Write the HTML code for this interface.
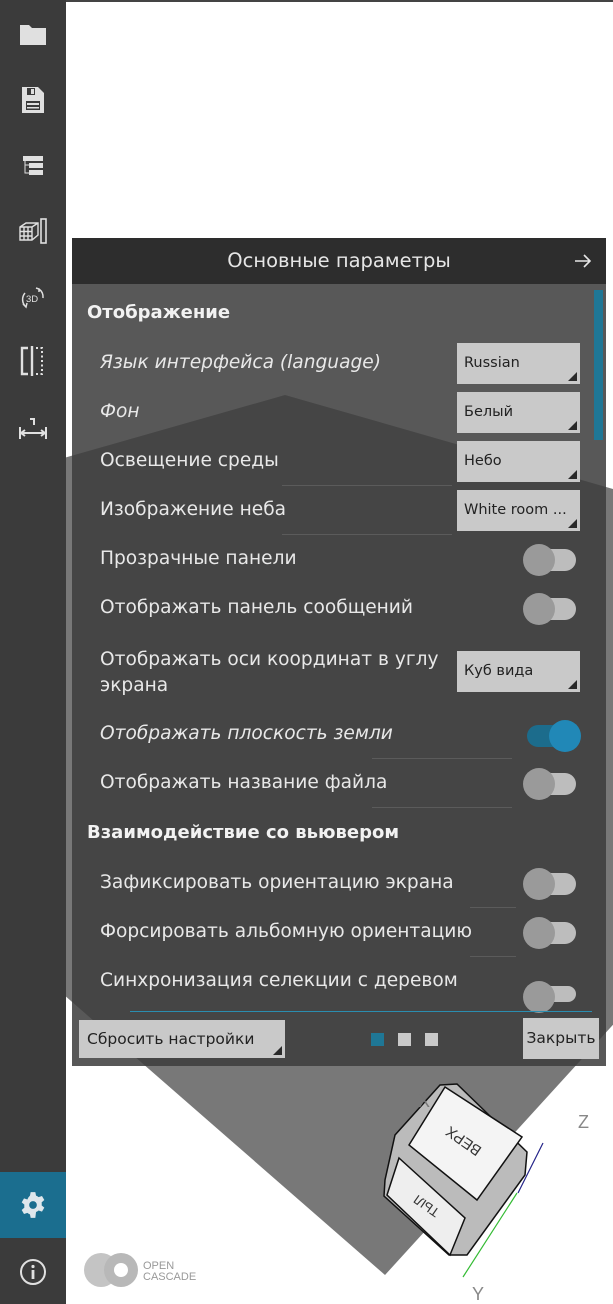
<!DOCTYPE html>
<html><head><meta charset="utf-8">
<style>
*{margin:0;padding:0;box-sizing:border-box}
body{width:613px;height:1304px;position:relative;overflow:hidden;background:#fff;font-family:"DejaVu Sans","Liberation Sans",sans-serif}
#side{position:absolute;left:0;top:0;width:66px;height:1304px;background:#3b3b3b}
.ic{position:absolute;left:0;width:66px;display:flex;justify-content:center;align-items:center}
#panel{position:absolute;left:72px;top:238px;width:534px;height:828px;background:rgba(60,60,60,0.86)}
#hdr{position:absolute;left:0;top:0;width:534px;height:46px;background:#2d2d2d;color:#e6e6e6;font-size:19.5px;text-align:center;line-height:46px}
.t{position:absolute;color:#e8e8e8;font-size:18.6px;white-space:nowrap}
.h{position:absolute;left:15px;color:#f2f2f2;font-size:18px;font-weight:bold}
.cb{position:absolute;left:385px;width:123px;height:41px;background:#c9c9c9;color:#222;font-size:14.5px;padding-left:7px;line-height:41px;white-space:nowrap}
.cb:after{content:"";position:absolute;right:3px;bottom:3px;border-left:9px solid transparent;border-bottom:9px solid #2a2a2a}
.tg{position:absolute;left:455px;width:49px;height:22px;border-radius:11px;background:#bdbdbd}
.tg:before{content:"";position:absolute;left:-4px;top:-5px;width:32px;height:32px;border-radius:50%;background:#9a9a9a}
.tg.on{background:#1c6c8c}
.tg.on:before{left:22px;background:#2188b7}
.ln{position:absolute;height:1px;background:rgba(255,255,255,0.12)}
</style></head><body>
<svg style="position:absolute;left:0;top:0" width="613" height="1304">
<polygon points="285,395,1000,600,385,1275,-400,590" fill="#787878"/>
<line x1="66" y1="1" x2="613" y2="1" stroke="#444" stroke-width="2"/>
</svg>
<div id="side">
 <div class="ic" style="top:18px;height:32px"><svg width="28" height="24"><path d="M1 3h9l3 3h14v17H1z" fill="#e0e0e0"/></svg></div>
 <div class="ic" style="top:84px;height:32px"><svg width="24" height="28"><path d="M1 1h16l6 6v20H1z" fill="#e0e0e0"/><rect x="6" y="2" width="8" height="7" fill="#3b3b3b"/><rect x="10" y="3" width="3" height="5" fill="#e0e0e0"/><rect x="5" y="15" width="14" height="9" fill="#3b3b3b"/><rect x="6" y="17" width="12" height="2" fill="#e0e0e0"/><rect x="6" y="21" width="12" height="1.5" fill="#e0e0e0"/></svg></div>
 <div class="ic" style="top:150px;height:32px"><svg width="24" height="24"><rect x="2" y="2" width="20" height="5" fill="#e0e0e0"/><rect x="8" y="9" width="14" height="5" fill="#e0e0e0"/><rect x="8" y="16" width="14" height="5" fill="#e0e0e0"/><path d="M4 7v12h4M4 11h4" stroke="#e0e0e0" fill="none"/></svg></div>
 <div class="ic" style="top:214px;height:34px"><svg width="30" height="28"><path d="M2 10l6-4h12v12l-6 5H2z M2 10h12v13 M14 10l6-4 M6 10v13 M10 10v13 M2 14.5h12 M2 19h12" stroke="#e0e0e0" fill="none" stroke-width="1.4"/><rect x="23" y="2" width="5" height="24" fill="none" stroke="#e0e0e0" stroke-width="1.6"/></svg></div>
 <div class="ic" style="top:282px;height:32px"><svg width="28" height="28"><text x="7" y="18" font-size="9.5" fill="#e0e0e0" font-family="Liberation Sans">3D</text><path d="M6 9a10 10 0 0 0 1 14M4 20l3 3 1-4M20 5a10 10 0 0 1 4 9M17 4l3 1 0 3" stroke="#e0e0e0" fill="none" stroke-width="1.5"/></svg></div>
 <div class="ic" style="top:344px;height:34px"><svg width="28" height="30"><path d="M9 2H3v26h6 M13 0v30" stroke="#e0e0e0" fill="none" stroke-width="2.4"/><path d="M17 2h6v26h-6" stroke="#e0e0e0" fill="none" stroke-width="2" stroke-dasharray="2 2.5"/></svg></div>
 <div class="ic" style="top:412px;height:34px"><svg width="30" height="26"><path d="M12 3h4v6 M2 11v12 M28 11v12 M3 17h24 M3 17l4-3 M3 17l4 3 M27 17l-4-3 M27 17l-4 3" stroke="#e0e0e0" fill="none" stroke-width="2"/></svg></div>
 <div class="ic" style="top:1172px;height:66px;background:#1b6e8f"><svg width="28" height="28" viewBox="0 0 24 24"><path d="M10 1h4l.6 3a8 8 0 0 1 2.2 1.3l2.9-1 2 3.4-2.3 2a8 8 0 0 1 0 2.6l2.3 2-2 3.4-2.9-1a8 8 0 0 1-2.2 1.3L14 23h-4l-.6-3a8 8 0 0 1-2.2-1.3l-2.9 1-2-3.4 2.3-2a8 8 0 0 1 0-2.6l-2.3-2 2-3.4 2.9 1A8 8 0 0 1 9.4 4z" fill="#dfe7ec"/><circle cx="12" cy="12" r="3.3" fill="#1b6e8f"/></svg></div>
 <div class="ic" style="top:1255px;height:34px"><svg width="28" height="28"><circle cx="14" cy="14" r="12" stroke="#e0e0e0" stroke-width="2" fill="none"/><circle cx="14" cy="8.5" r="1.6" fill="#e0e0e0"/><rect x="12.6" y="12" width="2.8" height="9" fill="#e0e0e0"/></svg></div>
</div>

<div id="panel">
 <div id="hdr">Основные параметры<svg style="position:absolute;right:14px;top:15px" width="18" height="16"><path d="M1 8h15M10 2l6 6-6 6" stroke="#e6e6e6" stroke-width="1.6" fill="none"/></svg></div>
 <div style="position:absolute;left:522px;top:52px;width:9px;height:150px;background:#1f7796"></div>
 <div class="h" style="top:64px">Отображение</div>
 <div class="t" style="left:28px;top:114px;font-style:italic">Язык интерфейса (language)</div>
 <div class="cb" style="top:105px">Russian</div>
 <div class="t" style="left:28px;top:163px;font-style:italic">Фон</div>
 <div class="cb" style="top:154px">Белый</div>
 <div class="t" style="left:28px;top:212px">Освещение среды</div>
 <div class="cb" style="top:203px">Небо</div>
 <div class="ln" style="left:210px;top:247px;width:170px"></div>
 <div class="t" style="left:28px;top:261px">Изображение неба</div>
 <div class="cb" style="top:252px">White room ...</div>
 <div class="ln" style="left:210px;top:296px;width:170px"></div>
 <div class="t" style="left:28px;top:310px">Прозрачные панели</div>
 <div class="tg" style="top:311px"></div>
 <div class="t" style="left:28px;top:359px">Отображать панель сообщений</div>
 <div class="tg" style="top:360px"></div>
 <div class="t" style="left:28px;top:409px;line-height:26px">Отображать оси координат в углу<br>экрана</div>
 <div class="cb" style="top:413px">Куб вида</div>
 <div class="t" style="left:28px;top:485px;font-style:italic">Отображать плоскость земли</div>
 <div class="tg on" style="top:487px"></div>
 <div class="ln" style="left:300px;top:520px;width:140px"></div>
 <div class="t" style="left:28px;top:534px">Отображать название файла</div>
 <div class="tg" style="top:535px"></div>
 <div class="ln" style="left:300px;top:569px;width:140px"></div>
 <div class="h" style="top:584px">Взаимодействие со вьювером</div>
 <div class="t" style="left:28px;top:634px">Зафиксировать ориентацию экрана</div>
 <div class="tg" style="top:635px"></div>
 <div class="ln" style="left:398px;top:669px;width:46px"></div>
 <div class="t" style="left:28px;top:683px">Форсировать альбомную ориентацию</div>
 <div class="tg" style="top:684px"></div>
 <div class="ln" style="left:398px;top:718px;width:46px"></div>
 <div class="t" style="left:28px;top:732px">Синхронизация селекции с деревом</div>
 <div class="tg" style="top:748px;height:16px"></div>
 <div style="position:absolute;left:58px;top:773px;width:462px;height:1px;background:#2a8db0"></div>
 <div style="position:absolute;left:7px;top:782px;width:206px;height:38px;background:#c9c9c9;color:#222;font-size:15.5px;line-height:38px;padding-left:8px;white-space:nowrap">Сбросить настройки<span style="position:absolute;right:3px;bottom:3px;border-left:9px solid transparent;border-bottom:9px solid #2a2a2a"></span></div>
 <div style="position:absolute;left:299px;top:795px;width:13px;height:13px;background:#1f7796"></div>
 <div style="position:absolute;left:326px;top:795px;width:13px;height:13px;background:#c9c9c9"></div>
 <div style="position:absolute;left:353px;top:795px;width:13px;height:13px;background:#c9c9c9"></div>
 <div style="position:absolute;left:451px;top:780px;width:76px;height:41px;background:#c9c9c9;color:#222;font-size:15.5px;line-height:41px;text-align:center">Закрыть</div>
</div>

<svg style="position:absolute;left:380px;top:1080px" width="233" height="224">
 <text x="198" y="48" font-size="18" fill="#888" font-family="Liberation Sans">Z</text>
 <text x="92" y="220" font-size="18" fill="#888" font-family="Liberation Sans">Y</text>
 <line x1="163" y1="63" x2="138" y2="113" stroke="#228" stroke-width="1.2"/>
 <line x1="137" y1="113" x2="83" y2="197" stroke="#3b3" stroke-width="1.2"/>
 <polygon points="60,5 77,4 147,72 145,95 87,175 69,175 4,116 5,100 15,55" fill="#bbb" stroke="#111" stroke-width="1.5"/>
 <polygon points="65,7 142,57 97,120 29,65" fill="#f4f4f4" stroke="#111" stroke-width="1.5"/>
 <polygon points="19,78 85,138 70,175 7,115" fill="#eee" stroke="#111" stroke-width="1.5"/>
 <text x="70" y="70" font-size="15" fill="#333" transform="rotate(215 86 64)" font-family="Liberation Sans">ВЕРХ</text>
 <text x="34" y="132" font-size="13" fill="#333" transform="rotate(215 47 127)" font-family="Liberation Sans">ТЫЛ</text>
 <text x="38" y="27" font-size="18" fill="#777" font-family="Liberation Sans">X</text>
</svg>

<svg style="position:absolute;left:80px;top:1250px" width="130" height="40">
 <circle cx="21" cy="20" r="17" fill="#c4c4c4"/>
 <circle cx="41" cy="20" r="17" fill="#b8b8b8"/>
 <circle cx="41" cy="20" r="7" fill="#fff"/>
 <text x="63" y="19" font-size="11" fill="#999" font-family="Liberation Sans">OPEN</text>
 <text x="63" y="30" font-size="11" fill="#999" font-family="Liberation Sans">CASCADE</text>
</svg>
</body></html>
